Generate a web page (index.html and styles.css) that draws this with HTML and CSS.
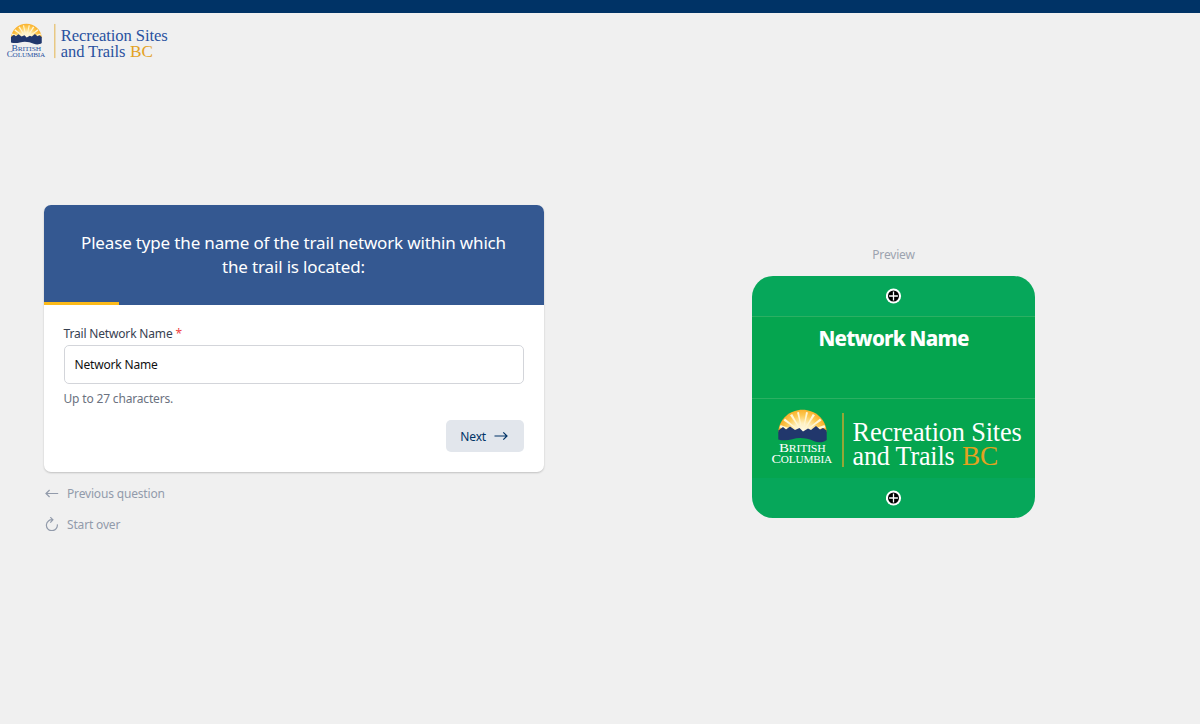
FILE: index.html
```html
<!DOCTYPE html>
<html lang="en">
<head>
<meta charset="utf-8">
<title>Recreation Sites and Trails BC</title>
<link rel="stylesheet" href="styles.css">
</head>
<body>
<svg class="defs" aria-hidden="true">
  <defs>
    <radialGradient id="sun" gradientUnits="userSpaceOnUse" cx="32.500" cy="25" r="25">
      <stop offset="0" stop-color="#fffdf2"/>
      <stop offset=".4" stop-color="#fff0bd"/>
      <stop offset=".7" stop-color="#fdca55"/>
      <stop offset="1" stop-color="#f9aa20"/>
    </radialGradient>
    <g id="emblem">
      <path d="M8.300 24C9 11 20 1.800 32.500 1.800S56 11 56.700 24L50 26H15z" fill="url(#sun)"/>
      <path d="M32.500 25L9.500 19.500 10.600 17zM32.500 25L13.500 12.500 15 10.500zM32.500 25L20 7.300 22.200 6zM32.500 25L27 4.600 29 4zM32.500 25L36 4 38 4.600zM32.500 25L42.800 6 45 7.300zM32.500 25L50 10.500 51.500 12.500zM32.500 25L54.400 17 55.500 19.500z" fill="#fff6d4"/>
      <path d="M8.300 22.500L13 19l3 2.500 4-3 5 3.500 4.500-2 3.500 3.500 5-3 3 1.500 5-4 4 3.500 3-1.500 3.700 2.500v9.500c-3.500 2.500-8 3-12.500 1.200-7-2.800-14-4.200-22-2-4 1.200-9 1.500-13.900.2z" fill="#21376c"/>
      <g class="emblem-text">
        <text x="9" y="44.200" textLength="46.500" lengthAdjust="spacingAndGlyphs"><tspan class="cap">B</tspan>RITISH</text>
        <text x="1.500" y="54.500" textLength="60.500" lengthAdjust="spacingAndGlyphs"><tspan class="cap">C</tspan>OLUMBIA</text>
      </g>
    </g>
    <g id="wordmark">
      <path d="M73 5v54" stroke="#e3a82b" stroke-width="1.300"/>
      <g class="wordmark-text">
        <text x="82.500" y="32.700" textLength="169" lengthAdjust="spacingAndGlyphs">Recreation Sites</text>
        <text x="82.500" y="57" textLength="102" lengthAdjust="spacingAndGlyphs">and Trails</text>
        <text x="192" y="57" textLength="36" lengthAdjust="spacingAndGlyphs" fill="#e3a21f">BC</text>
      </g>
    </g>
    <g id="bolt">
      <circle cx="7.500" cy="8" r="7.600" fill="#fff"/>
      <circle cx="7.500" cy="8" r="5.500" fill="#000"/>
      <path d="M7.500 3.600v8.800M3.100 8h8.800" stroke="#fff" stroke-width="1.300"/>
    </g>
  </defs>
</svg>

<header class="topbar">
  <svg class="brand" width="164" height="40" viewBox="0 0 164 40">
    <use href="#emblem" transform="translate(-.3 .6) scale(.636)"/>
    <use href="#wordmark" transform="translate(2.700 -1.200) scale(.632)"/>
  </svg>
</header>

<main class="page">
  <section class="wizard">
    <form class="card">
      <div class="card-head">
        <h1 class="question">Please type the name of the trail network within which the trail is located:</h1>
        <div class="progress"></div>
      </div>
      <div class="card-body">
        <label class="label" for="network">Trail Network Name <span class="required">*</span></label>
        <input class="input" id="network" type="text" value="Network Name">
        <p class="help">Up to 27 characters.</p>
        <button class="next" type="button">Next
          <svg width="14" height="10" viewBox="0 0 14 10"><path d="M.5 5h12.500M9.300 1.300L13 5 9.300 8.700"/></svg>
        </button>
      </div>
    </form>
    <nav class="links">
      <a class="link"><svg width="14" height="14" viewBox="0 0 14 14"><path d="M13.200 7.500H1M4.600 4L1 7.500 4.600 11"/></svg>Previous question</a>
      <a class="link"><svg width="14" height="14" viewBox="0 0 14 14"><path d="M12.300 7.300A5.500 5.500 0 1 1 7.800 2.800M5.300.2L7.900 2.800 5.300 5.600"/></svg>Start over</a>
    </nav>
  </section>

  <section class="preview">
    <p class="preview-label">Preview</p>
    <div class="sign">
      <div class="sign-end"><svg width="16" height="16"><use href="#bolt"/></svg></div>
      <div class="sign-name">Network Name</div>
      <div class="sign-logo">
        <svg width="254" height="62" viewBox="0 0 254 62"><use href="#emblem"/><use href="#wordmark"/></svg>
      </div>
      <div class="sign-end"><svg width="16" height="16"><use href="#bolt"/></svg></div>
    </div>
  </section>
</main>
</body>
</html>
```
FILE: styles.css
```css
* { box-sizing: border-box; }

body {
  margin: 0;
  height: 724px;
  overflow: hidden;
  background: #f0f0f0;
  font-family: "Noto Sans", sans-serif;
  font-size: 12px;
  line-height: 17px;
  letter-spacing: -.17px;
}

h1, p { margin: 0; font-weight: 400; }

.defs { position: absolute; width: 0; height: 0; }

.topbar {
  height: 66px;
  padding: 9px 0 0 6px;
  border-top: 13px solid #003366;
}

.brand {
  display: block;
  overflow: visible;
  color: #2a52a0;
}

.emblem-text {
  font-family: "Liberation Serif", serif;
  font-size: 9.8px;
  fill: currentColor;
}

.emblem-text .cap { font-size: 12.5px; }

.wordmark-text {
  font-family: "Liberation Serif", serif;
  font-size: 27px;
  fill: currentColor;
}

.page {
  display: flex;
  padding-top: 139.400px;
}

.wizard {
  width: 587px;
  padding-left: 43.500px;
}

.card {
  width: 500px;
  height: 266.600px;
  overflow: hidden;
  border-radius: 7px;
  background: #fff;
  box-shadow: 0 1px 2px rgba(0, 0, 0, .2);
}

.card-head {
  display: flex;
  flex-direction: column;
  justify-content: space-between;
  height: 100px;
  padding-top: 26px;
  background: #345891;
  color: #fff;
}

.question {
  padding: 0 34px;
  font-size: 17px;
  line-height: 23.33px;
  letter-spacing: -.16px;
  text-align: center;
}

.progress {
  width: 15%;
  height: 3px;
  background: #fcba19;
}

.card-body {
  display: flex;
  flex-direction: column;
  padding: 20px;
}

.label { color: #374151; }

.required { color: #ef4444; }

.input {
  height: 39px;
  margin: 3px 0 6px;
  padding: 0 10px;
  border: 1px solid #d3d5da;
  border-radius: 5px;
  background: #fff;
  color: #111;
  font: inherit;
  letter-spacing: inherit;
}

.help { color: #6b7280; }

.next {
  display: flex;
  align-items: center;
  align-self: flex-end;
  gap: 8px;
  height: 32px;
  margin-top: 13px;
  padding: 0 15.500px 0 14px;
  border: 0;
  border-radius: 5px;
  background: #e2e6ec;
  color: #003366;
  font: inherit;
  letter-spacing: inherit;
}

.next svg, .link svg {
  fill: none;
  stroke: currentColor;
  stroke-width: 1.200;
}

.links {
  display: flex;
  flex-direction: column;
  gap: 14px;
  padding: 13px 0 0 1.500px;
  color: #929bab;
}

.link {
  display: flex;
  align-items: center;
  gap: 8px;
}

.preview {
  display: flex;
  flex-direction: column;
  align-items: center;
  width: 613px;
  padding-top: 40.600px;
}

.preview-label { color: #9ca3af; }

.sign {
  width: 283px;
  margin-top: 13px;
  overflow: hidden;
  border-radius: 21px;
  background: #06a75a;
}

.sign-end {
  display: flex;
  align-items: center;
  justify-content: center;
  height: 40px;
}

.sign-name, .sign-logo {
  display: flex;
  justify-content: center;
  border-top: 1px solid #2bb062;
  background: #05a54f;
}

.sign-name {
  height: 82px;
  padding-top: 6px;
  color: #fff;
  font-size: 20.500px;
  font-weight: 800;
  letter-spacing: -.75px;
  line-height: 30px;
}

.sign-logo {
  height: 80px;
  padding: 9px 0 0 6px;
  color: #fff;
}
```
